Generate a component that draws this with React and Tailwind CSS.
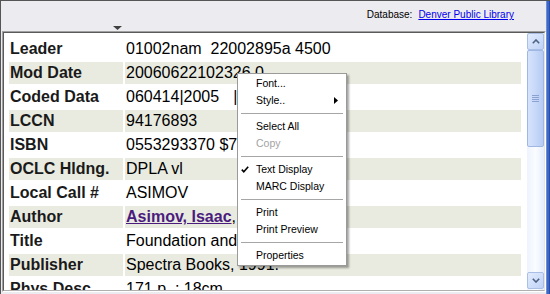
import React from "react";

const rows = [
  ["Leader", "01002nam  22002895a 4500"],
  ["Mod Date", "20060622102326.0"],
  [
    "Coded Data",
    <>
      060414|2005<span className="ml-[14px]">|nyu</span>
    </>,
  ],
  ["LCCN", "94176893"],
  ["ISBN", "0553293370 $7.99"],
  ["OCLC Hldng.", "DPLA vl"],
  ["Local Call #", "ASIMOV"],
  [
    "Author",
    <>
      <a className="font-bold text-[#4b1c7e] underline">Asimov, Isaac</a>, 1920-
    </>,
  ],
  ["Title", "Foundation and empire /"],
  ["Publisher", "Spectra Books, 1991."],
  ["Phys Desc", "171 p. ; 18cm."],
];

function Chevron({ down }) {
  return (
    <svg width="8" height="5" viewBox="0 0 8 5">
      <polyline
        points={down ? "0.8,0.8 4,4 7.2,0.8" : "0.8,4.2 4,1 7.2,4.2"}
        fill="none"
        stroke="#4d6185"
        strokeWidth="1.6"
      />
    </svg>
  );
}

function ScrollButton({ down }) {
  return (
    <div className="h-[17px] w-[17px] shrink-0 rounded-[2px] border border-[#a9bfe6] bg-gradient-to-br from-[#e3ecfd] to-[#bfd2f6] flex items-center justify-center">
      <Chevron down={down} />
    </div>
  );
}

function MenuItem({ children, disabled, checked, arrow }) {
  return (
    <div
      className={`h-[17px] flex items-center pl-[18px] pr-[8px] relative ${
        disabled ? "text-[#a3a3a3]" : "text-black"
      }`}
    >
      {checked && (
        <svg
          className="absolute left-[3px] top-[5px]"
          width="8"
          height="7"
          viewBox="0 0 8 7"
        >
          <polyline
            points="0.8,3.6 2.8,5.8 7.2,0.8"
            fill="none"
            stroke="#000"
            strokeWidth="1.6"
          />
        </svg>
      )}
      <span className="flex-1">{children}</span>
      {arrow && (
        <svg width="4" height="7" viewBox="0 0 4 7">
          <polygon points="0,0 4,3.5 0,7" fill="#000" />
        </svg>
      )}
    </div>
  );
}

function Sep() {
  return (
    <div className="h-[9px] flex items-center px-[3px]">
      <div className="h-px w-full bg-[#a6a6a6]" />
    </div>
  );
}

export default function App() {
  return (
    <div
      className="relative w-[550px] h-[294px] overflow-hidden bg-[#ecebef] border-t border-l border-t-[#555] border-l-[#555] flex"
      style={{ fontFamily: '"Liberation Sans", Arial, sans-serif' }}
    >
      <div className="flex-1 flex flex-col min-w-0">
        {/* top bar */}
        <div className="h-[30px] flex flex-col shrink-0">
          <div className="flex justify-end pt-[8px] pr-[32px] text-[10px] leading-[12px] text-black">
            <span>Database:</span>
            <a className="ml-[6px] text-[#0000ee] underline">Denver Public Library</a>
          </div>
          <div className="mt-auto pl-[112px] pb-[1px]">
            <svg width="9" height="4" viewBox="0 0 9 4" className="block">
              <polygon points="0,0 9,0 4.5,4" fill="#404040" />
            </svg>
          </div>
        </div>

        {/* panel */}
        <div className="ml-[1px] h-[261px] border-t border-l border-t-[#a0a0a0] border-l-[#a0a0a0] border-r border-b border-r-[#ffffff] border-b-[#ffffff]">
          <div className="h-full border-t border-l border-t-[#5a5a5a] border-l-[#5a5a5a] border-r border-b border-r-[#e4e4e4] border-b-[#b0b0b0] bg-white flex">
            {/* table */}
            <div className="flex-1 overflow-hidden pt-[5px] pl-[5px] flex flex-col gap-[2px] text-[16px] text-black">
              {rows.map(([label, value], i) => {
                const shade = i % 2 === 1 ? "bg-[#e9ebe0]" : "";
                return (
                  <div key={label} className="flex gap-[2px] h-[22px] shrink-0 leading-[22px]">
                    <div className={`w-[114px] shrink-0 pl-px font-bold text-[#1a1a1a] ${shade}`}>
                      {label}
                    </div>
                    <div className={`w-[396px] shrink-0 pl-px whitespace-pre overflow-hidden ${shade}`}>
                      {value}
                    </div>
                  </div>
                );
              })}
            </div>

            {/* scrollbar */}
            <div className="w-[17px] shrink-0 flex flex-col pb-[1px] bg-gradient-to-r from-[#eef3fd] via-[#fafcff] to-[#e6eefc]">
              <ScrollButton />
              <div className="h-[97px] shrink-0 rounded-[2px] border border-[#9fb7e2] bg-gradient-to-r from-[#d6e3fb] via-[#c7d8f8] to-[#b6cbf3] flex items-center justify-center">
                <div className="flex flex-col gap-[1px]">
                  <div className="w-[7px] h-px bg-[#8aa3d2]" />
                  <div className="w-[7px] h-px bg-[#8aa3d2]" />
                  <div className="w-[7px] h-px bg-[#8aa3d2]" />
                  <div className="w-[7px] h-px bg-[#8aa3d2]" />
                </div>
              </div>
              <div className="flex-1" />
              <ScrollButton down />
            </div>
          </div>
        </div>
      </div>

      {/* window right frame */}
      <div className="w-[4px] shrink-0 flex">
        <div className="w-[1px] bg-[#6f8fd0]" />
        <div className="w-[2px] bg-[#3d68c8]" />
        <div className="w-[1px] bg-[#2a4ea8]" />
      </div>

      {/* context menu */}
      <div className="absolute left-[236px] top-[72px] w-[110px] bg-white border border-[#9a9a9a] shadow-[2px_2px_2px_rgba(0,0,0,0.35)] py-[1px] text-[10.5px] leading-[17px]">
        <MenuItem>Font...</MenuItem>
        <MenuItem arrow>Style..</MenuItem>
        <Sep />
        <MenuItem>Select All</MenuItem>
        <MenuItem disabled>Copy</MenuItem>
        <Sep />
        <MenuItem checked>Text Display</MenuItem>
        <MenuItem>MARC Display</MenuItem>
        <Sep />
        <MenuItem>Print</MenuItem>
        <MenuItem>Print Preview</MenuItem>
        <Sep />
        <MenuItem>Properties</MenuItem>
      </div>
    </div>
  );
}
